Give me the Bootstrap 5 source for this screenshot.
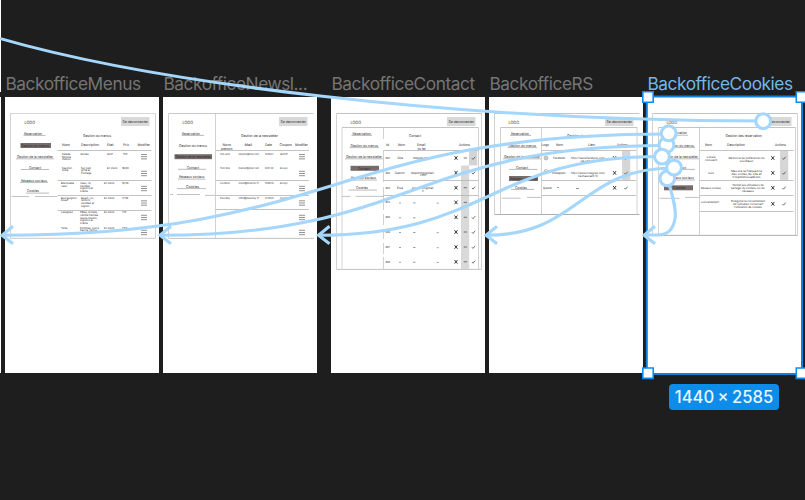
<!DOCTYPE html>
<html lang="fr">
<head>
<meta charset="utf-8">
<meta name="viewport" content="width=device-width, initial-scale=1">
<title>Backoffice</title>
<link href="https://cdn.jsdelivr.net/npm/bootstrap@5.3.0/dist/css/bootstrap.min.css" rel="stylesheet">
<style>
body{background:#1e1e1e;font-family:Inter,sans-serif}
.stage{width:805px;height:500px}
.boards{padding-top:73px;gap:4px}
.board{width:154px}
.board-edge{width:1px}
.board-edge i{display:block;background:#fff;width:1px}
.edge-top{height:92px;margin-top:-73px}
.edge-bottom{height:276px;margin-top:5px}
.board-title{height:24px;line-height:22px;font-size:17.3px;letter-spacing:-.45px;color:#757575;padding-left:.5px}
.board-paper{height:276px;width:154px}
.board.after-gap{margin-left:10px}
.board.selected{width:155px}
.board.selected .board-title{color:#75b6e9}
.board.selected .board-paper{width:155px}
.board-paper svg,.links{display:block;overflow:visible}
.board-paper text{font-family:Inter,sans-serif;fill:#2b2b2b;text-rendering:geometricPrecision}
.links{left:0;top:0}
.size-tag{left:669px;top:384px;width:110px;height:26px;border-radius:4px;background:#0d8ce9;color:#e9f5ff;font-size:16.6px;font-weight:500;line-height:26px;word-spacing:-1px}
</style>
<script src="https://cdn.jsdelivr.net/npm/bootstrap@5.3.0/dist/js/bootstrap.bundle.min.js"></script>
</head>
<body class="m-0 overflow-hidden">
<main class="stage position-relative overflow-hidden">
  <div class="boards d-flex align-items-start">
    <div class="board-edge flex-shrink-0"><i class="edge-top"></i><i class="edge-bottom"></i></div>
    <section class="board flex-shrink-0"><div class="board-title text-nowrap">BackofficeMenus</div><div class="board-paper bg-white" data-board="menus"></div></section>
    <section class="board flex-shrink-0"><div class="board-title text-nowrap">BackofficeNewsl...</div><div class="board-paper bg-white" data-board="news"></div></section>
    <section class="board after-gap flex-shrink-0"><div class="board-title text-nowrap">BackofficeContact</div><div class="board-paper bg-white" data-board="contact"></div></section>
    <section class="board flex-shrink-0"><div class="board-title text-nowrap">BackofficeRS</div><div class="board-paper bg-white" data-board="rs"></div></section>
    <section class="board selected flex-shrink-0"><div class="board-title text-nowrap">BackofficeCookies</div><div class="board-paper bg-white" data-board="cookies"></div></section>
  </div>

  <svg class="links position-absolute" width="805" height="500" viewBox="0 0 805 500" fill="none">
    <g fill="#fff" stroke="#1580d8" stroke-width="2">
      <path fill="none" d="M646.8 96.5H802V374H646.8z"/>
      <g stroke="#0d8ce9" stroke-width="1.6"><path d="M642.8 91.8h10.4v10.4h-10.4zM796.3 91.8h10.4v10.4h-10.4zM642.8 368h10.4v10.4h-10.4zM796.3 368h10.4v10.4h-10.4z"/></g>
    </g>
    <g stroke="#a5d6fb" stroke-width="3.1">
      <path d="M-1 38.2C150 82 450 121 763 121"/>
      <path d="M2 235.3C335 235.3 335 134 668 134"/>
      <path d="M160 235.3C412 235.3 412 145.5 665 145.5"/>
      <path d="M318 235.3C489 235.3 489 156.5 661 156.5"/>
      <path d="M486 235.3C580 235.3 580 168 673 168"/>
      <path d="M667.5 178C671 192 677 208 675 219C673 230 667 235 658 235H644"/>
      <path d="M13 226.3L2 235.3L13 243.8M171 226.3L160 235.3L171 243.8M329.500 226.3L318.500 235.3L329.500 243.8M497 226.3L486 235.3L497 243.8M655 226.3L644 235.3L655 243.8"/>
      <g fill="#fff">
        <circle cx="763.3" cy="121.2" r="7.4"/><circle cx="666.5" cy="145" r="7.4"/><circle cx="668.700" cy="133.300" r="7.4"/>
        <circle cx="662" cy="156.6" r="7.4"/><circle cx="667.3" cy="178.3" r="7.4"/><circle cx="674" cy="167.6" r="7.4"/>
      </g>
    </g>
  </svg>
  <div class="size-tag position-absolute text-center text-nowrap">1440 × 2585</div>
</main>

<script>
// Wireframe helpers; every coordinate is in canvas space.
const rect = (x, y, w, h, f) => `<rect x="${x}" y="${y}" width="${w}" height="${h}" fill="${f}"/>`;
const hl = (x1, x2, y, c = '#b4b4b4') => `<path d="M${x1} ${y}H${x2}" stroke="${c}" stroke-width=".8"/>`;
const vl = (x, y1, y2, c = '#c6c6c6') => `<path d="M${x} ${y1}V${y2}" stroke="${c}" stroke-width=".8"/>`;
const tx = (x1, x2, y, s, f = 3.6) => `<text x="${x1}" y="${y}" font-size="${f}" textLength="${x2 - x1}" lengthAdjust="spacingAndGlyphs">${s}</text>`;
const ul = (x1, x2, y, s, a = x1 - 1, b = x2 + 1) => tx(x1, x2, y, s) + hl(a, b, y + .8, '#aaa');
const hot = (x, y, w, s, a, b) => rect(x, y, w, 5, '#776c6c') + tx(a, b, y + 3.9, s);
const lines = (x, y, list, f = 2.6) => list.map((s, i) => `<text x="${x}" y="${y + i * 2.6}" font-size="${f}">${s}</text>`).join('');
const mid = (x, y, list, w) => list.map((s, i) => tx(x - w[i] / 2, x + w[i] / 2, y + i * 3.1, s, 2.9)).join('');
const burger = (x, ys) => ys.map(y => hl(x, x + 6, y - 2.2, '#777') + hl(x, x + 6, y, '#777') + hl(x, x + 6, y + 2.2, '#777')).join('');
const cross = (x, y) => `<path d="M${x - 1.5} ${y - 1.8}l3 3.6m0 -3.6l-3 3.6" stroke="#222" stroke-width=".9"/>`;
const check = (x, y) => `<path d="M${x - 1.6} ${y + .2}l1.1 1.2l2.200 -2.600" fill="none" stroke="#333" stroke-width=".7"/>`;
const top_ = x => tx(x + 19.5, x + 30, 123.700, 'LOGO', 4.4) + rect(x + 116, 117, 28.5, 9, '#d9d9d9') + tx(x + 117.5, x + 143, 122.8, 'Se deconnecter');

const boards = {
menus: [5, top_(5), hl(10, 155.5, 113.5, '#ccc'), hl(10, 155.5, 238.3, '#bbb'), vl(10.5, 113.5, 238), vl(155.5, 113.5, 238),
  ul(24, 42, 134.600, 'Reservation', 23.5, 45.5), tx(83, 111, 136.5, 'Gestion du menus'), hot(20.5, 143, 30.5, 'Gestion du menus', 21, 49),
  ul(17, 53, 158, 'Gestion de la newsletter'), ul(29, 41, 168.700, 'Contact', 21, 49), ul(21, 47, 181.6, 'Réseaux sociaux'), ul(27, 39, 192.3, 'Cookies', 26, 49),
  hl(11.5, 29, 196.5), hl(35, 57, 196.5),
  tx(62, 70, 146.4, 'Nom'), tx(81, 99, 146.4, 'Description'), tx(107, 113.5, 146.4, 'Etat'), tx(123, 129, 146.4, 'Prix'), tx(137.5, 150, 146.4, 'Modifier'),
  ...[150.5, 180.5, 195.5, 210.5].map(y => hl(57.5, 151.5, y)),
  lines(62, 155, ['Salade', 'Niçoise', 'maison']), lines(80.5, 155, ['Entrée']), lines(107, 155, ['Actif']), lines(123, 155, ['15€']),
  lines(62, 168.5, ['Saumon', 'fumé']), lines(81, 168.5, ['Sur pain', 'grillé et', 'fromage']), lines(107, 169, ['En stock']), lines(122, 168.5, ['18,00']),
  lines(61, 184, ['Blanquette', 'veau']), lines(80, 184, ['Veau, riz,', 'carottes,', 'oignons et', 'crème']), lines(104, 184, ['En stock']), lines(122, 184, ['16,50']),
  lines(61, 198.800, ['Bourguignon', 'boeuf']), lines(81, 198.800, ['Boeuf, vin,', 'lardons,', 'carottes et', 'oignon']), lines(104, 198.800, ['En stock']), lines(122, 198.800, ['17,50']),
  lines(61, 213.3, ['Lasagnes']), lines(80, 213.3, ['Pâtes, tomate,', 'viande hachée', 'sauce maison,', 'oignons et', 'crème']), lines(104, 213.3, ['En stock']), lines(122, 213.3, ['14€']),
  lines(61, 228.6, ['Tarte']), lines(80, 228.6, ['Pommes, sucre', 'beurre, farine']), lines(104, 228.6, ['En stock']), lines(122, 228.6, ['7,50']),
  burger(141, [156.7, 173.5, 188.5, 203, 217.5, 232.5])],
news: [163, top_(163), hl(168.5, 313.5, 113.5, '#bbb'), hl(168.5, 314, 238.4), vl(168.5, 113.5, 238), vl(215.5, 113.5, 238),
  ul(182, 200, 134.6, 'Reservation', 181.5, 204), tx(241, 278, 136.5, 'Gestion de la newsletter'), tx(179, 207, 147, 'Gestion du menus'),
  hot(174.5, 154.2, 37.5, 'Gestion de la newsletter', 175.5, 211), ul(187, 199, 168.5, 'Contact', 178, 206), ul(179, 204.5, 178.3, 'Réseaux sociaux'), ul(186, 199, 187.800, 'Cookies', 177, 206),
  hl(170, 173, 194.5), hl(177, 200, 194.5), hl(205, 215, 195.4),
  tx(222.5, 231, 146.4, 'Nom'), tx(221, 232.5, 150, 'prénom'), tx(244.5, 252, 146.4, 'Mail'), tx(265, 272, 146.4, 'Date'), tx(279.5, 292, 146.4, 'Coupon'), tx(295, 308, 146.4, 'Modifier'),
  ...[150.5, 180.5, 195.5, 209.5].map(y => hl(215.5, 309, y)),
  ...[[155, 'Tom Jolie', 'tomjolie@mail.com', '12/05/24', 'Actif'], [168.8, 'Tom Doe', 'thomas@gmail.com', '02/04/22', 'Envoyé'], [184, 'Ines Martin', 'ines@martin.fr', '15/06/79', 'Envoyé'], [198.8, 'Paul Roy', 'info@paulroy.fr', '27/08/21', 'Inactif']]
    .map(r => tx(220, 230, r[0], r[1], 2.7) + tx(238.5, 259, r[0], r[2], 2.7) + tx(265, 273.5, r[0], r[3], 2.7) + tx(280, 287.5, r[0], r[4], 2.7)),
  burger(299, [156.7, 173.5, 188.5, 203, 217.5, 232.5])],
contact: [331, top_(331), hl(336.5, 481.5, 113.5), hl(336.5, 481.5, 269.4), vl(336.5, 113.5, 269), vl(481.5, 113.5, 269), hl(342, 478.5, 127.5), vl(342, 127.5, 269), vl(478.5, 127.5, 269),
  rect(469, 151, 8.3, 14.5, '#d4d4d4'), rect(461, 165.5, 8.2, 103.5, '#d9d9d9'), vl(383.5, 127.5, 139), vl(383.5, 150, 182), vl(383.5, 187, 210), vl(383.5, 214, 225), vl(383.5, 229, 239), vl(383.5, 243, 254), vl(383.5, 257, 269),
  ul(352.5, 371, 134.6, 'Reservation'), tx(409, 421, 136.5, 'Contact'), ul(350.5, 378, 146.8, 'Gestion du menus'), ul(346, 382, 158, 'Gestion de la newsletter'),
  hot(350.5, 165.8, 28.5, 'Contact', 358, 370), ul(351, 376, 179.2, 'Réseaux sociaux'), ul(356, 368, 189.3, 'Cookies', 348.5, 377), hl(342, 350.5, 196.4), hl(355.5, 384, 196.4),
  tx(386, 389, 146.4, 'Id'), tx(398, 405, 146.4, 'Nom'), tx(417, 425.5, 146.4, 'Email'), tx(417.5, 425.5, 150, 'ou tel'), tx(459, 470, 146.4, 'Actions'),
  ...[150.5, 180.5, 195.5].map(y => hl(383.5, 478.5, y)),
  ...[158, 172.7, 187.700, 202.4, 217.3, 232, 247, 261.8].map((y, i) => tx(385.5, 390, y + 1, '#0' + (i + 1), 2.8) + cross(456, y) + hl(463.7, 467, y, '#555') + check(473.5, y) + (i > 2 ? hl(399, 401, y + .5, '#888') + hl(413, 415.500, y + .5, '#888') + hl(436.500, 439, y + .7, '#999') : '')),
  tx(397.5, 403, 159, 'Doe', 3), tx(413, 428, 159, 'doe@mail.com', 3), tx(395, 404.500, 173.5, 'Dupont', 3), tx(411, 434.500, 173.5, 'dupont@gmail.', 3), tx(420, 426, 176.4, 'com', 3), tx(397, 403, 188.700, 'Eva', 3), tx(412, 434, 188.700, 'eva.martin@mail.', 3), tx(422, 424, 191.500, 'fr', 3)],
rs: [489, top_(489), hl(494.5, 639.5, 113.5), hl(494.5, 639.5, 214.5, '#999'), vl(494.5, 113.5, 214.5), hl(500.5, 637, 127.5), vl(500.5, 127.5, 214.5), vl(637, 127.5, 214.5), vl(541.5, 127.5, 214.5), rect(622, 150.8, 8.3, 29.5, '#d6d6d6'),
  ul(511, 529, 134.6, 'Reservation', 510, 531), tx(567, 600, 136.5, 'Gestion des réseaux'), ul(508.5, 536, 146.8, 'Gestion du menus'), ul(504, 540, 158, 'Gestion de la newsletter'), ul(516, 528, 168.6, 'Contact', 509, 537.5),
  hot(509, 176, 29, 'Réseaux sociaux', 510, 537), ul(515, 527, 188.600, 'Cookies', 511, 534), hl(501.5, 520.5, 198.2), hl(527, 541.5, 197.4),
  tx(541.5, 549, 146.4, 'Logo'), tx(556, 563, 146.4, 'Nom'), tx(588, 595, 146.4, 'Lien'), tx(617, 628, 146.4, 'Actions'),
  ...[150.5, 180.5, 195.5].map(y => hl(541.5, 636, y)),
  ...[158, 171.5].map(y => `<circle cx="546" cy="${y}" r="1.9" fill="none" stroke="#777" stroke-width=".6"/>` + hl(545, 547, y, '#777')),
  tx(553, 565, 159, 'Facebook', 3.1), mid(588, 159, ['https://www.facebook.com/', 'resto.fr'], [34, 15]), tx(552, 565.500, 173.700, 'Instagram', 3.1), mid(588, 173.7, ['https://www.instagram.com/', 'restaurant.fr'], [34, 20]),
  tx(543, 552, 188.5, 'Ajouter', 3.1), hl(557, 559, 187.5, '#777'), hl(576, 579, 188.5, '#777'),
  ...[158, 172.9, 187.8].map(y => cross(614.6, y) + check(626, y))],
cookies: [647, top_(647), hl(652.5, 797.5, 113.5), hl(652.5, 797.5, 235.4, '#999'), vl(652.5, 113.5, 235), vl(797.5, 113.5, 235), hl(658.5, 795.5, 127.5), vl(658.5, 127.5, 235), vl(795.5, 127.5, 235), vl(699.5, 127.5, 235), rect(780, 150.8, 8.3, 29.5, '#d6d6d6'),
  ul(669, 687, 134.4, 'Reservation'), tx(725.5, 762, 136.5, 'Gestion des réservation'), ul(667, 694, 146.8, 'Gestion du menus'), ul(662, 698, 158, 'Gestion de la newsletter'), ul(674, 686, 168.6, 'Contact', 667, 695), ul(668, 694, 179.2, 'Réseaux sociaux'),
  hot(664, 185.3, 29, 'Cookies', 673, 685.5), hl(659.5, 679.5, 198.3), hl(685, 699.5, 197.4),
  tx(705, 712, 145.8, 'Nom'), tx(727, 745, 145.8, 'Description'), tx(775, 786, 146.4, 'Actions'),
  ...[150.5, 180.5, 195.5, 211.5].map(y => hl(699.5, 793.500, y)),
  mid(711, 158.2, ['Cookie', 'consent'], [9, 12]), mid(746.500, 159, ['Mémorise les préférences du', 'visiteur'], [36, 14]), mid(711, 173.6, ['Suivi'], [6]), mid(746.5, 171.5, ['Mesure la fréquence', 'des visites du site et', "l'optimisation"], [31, 30, 28]),
  mid(711, 188.5, ['Réseaux sociaux'], [20]), mid(748, 185.8, ['Permet aux utilisateurs de', 'partager du contenu sur les', 'réseaux'], [31, 34, 12]), mid(710, 203.400, ['Consentement'], [18]), mid(748, 201.8, ['Enregistre le consentement', "de l'utilisateur concernant", "l'utilisation de cookies"], [34, 30, 28]),
  ...[158, 172.9, 187.8, 203.8].map(y => cross(772.8, y) + check(784, y))]
};
document.querySelectorAll('[data-board]').forEach(el => {
  const [x, ...parts] = boards[el.dataset.board];
  el.innerHTML = `<svg width="154" height="276" viewBox="${x} 97 154 276">${parts.flat().join('')}</svg>`;
});
</script>
</body>
</html>
